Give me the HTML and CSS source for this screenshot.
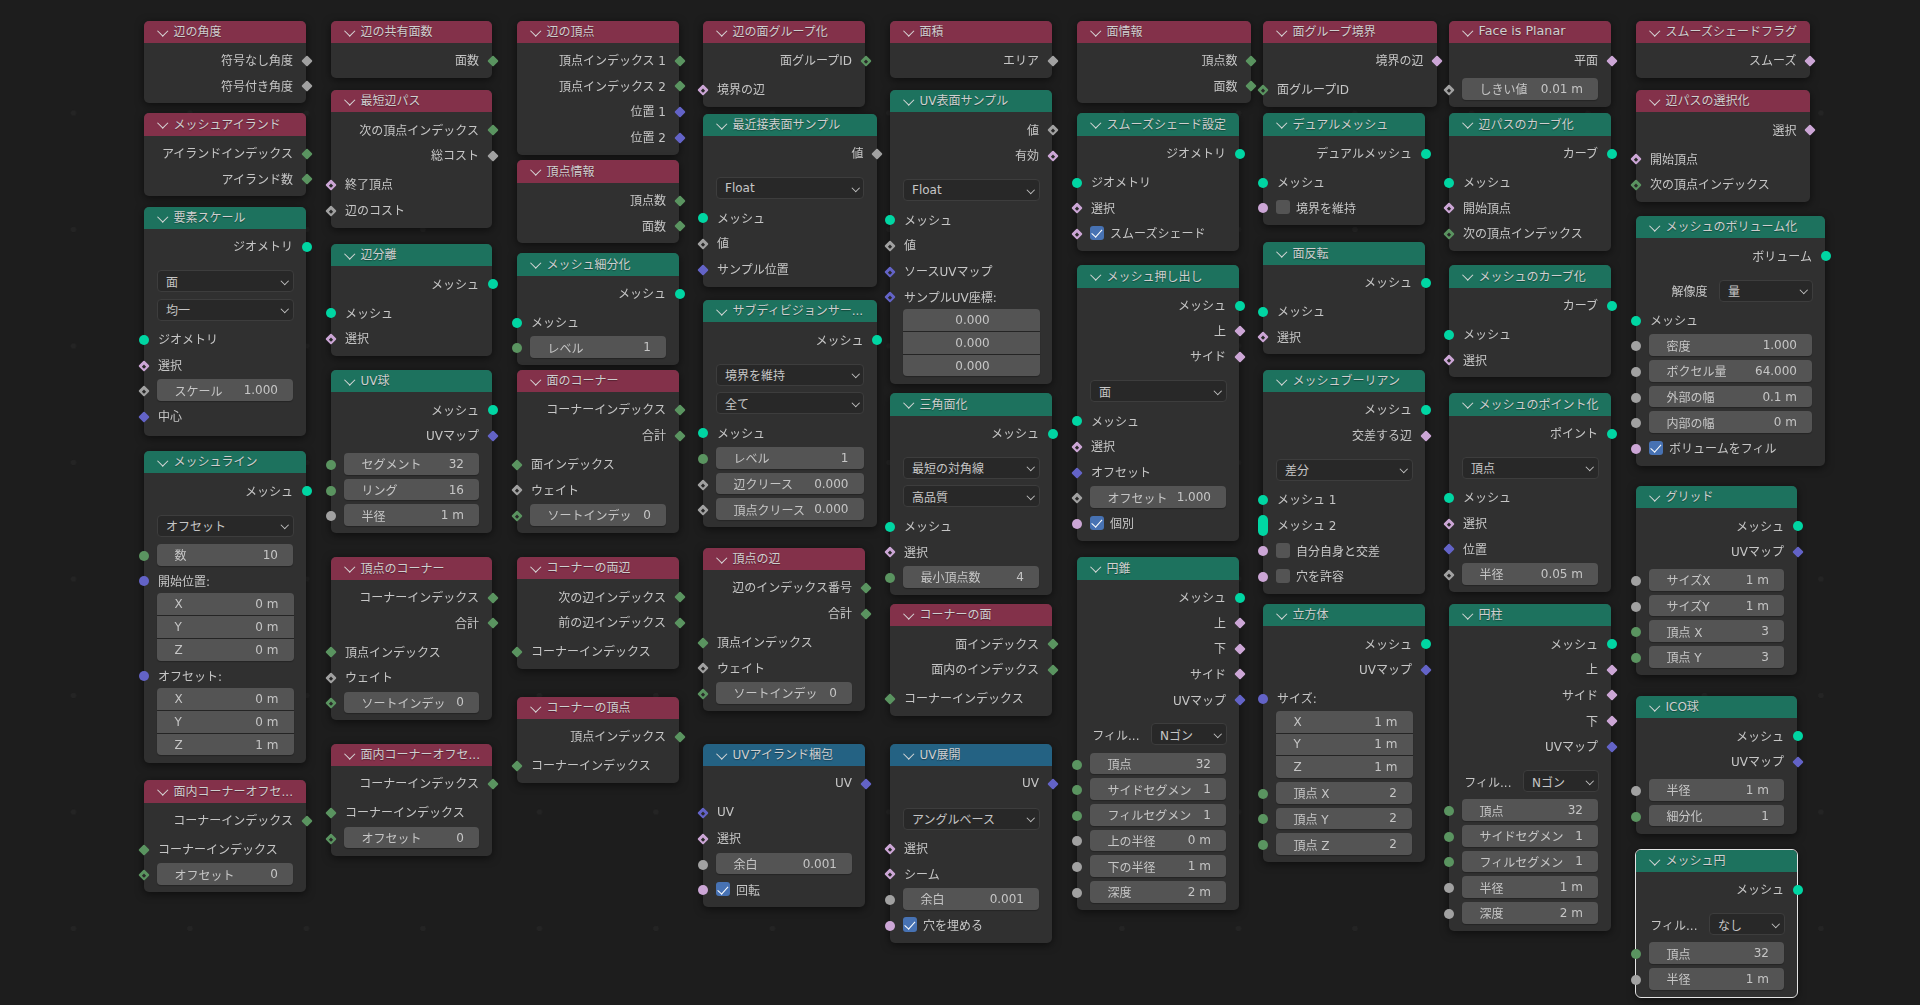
FILE: index.html
```html
<!DOCTYPE html>
<html lang="ja">

<head>
    <meta charset="UTF-8">
    <meta name="viewport" content="width=device-width, initial-scale=1.0">
    <title>Geometry Nodes</title>
    <link rel="stylesheet" href="styles.css">
</head>

<body>
    <div class="canvas">

        <!-- column 1 -->
        <div class="node red col1 edge-angle">
            <div class="head"><span>辺の角度</span></div>
            <div class="body">
                <div class="row out"><span>符号なし角度</span><i class="sock float dia"></i></div>
                <div class="row out"><span>符号付き角度</span><i class="sock float dia"></i></div>
            </div>
        </div>
        <div class="node red col1 mesh-island">
            <div class="head"><span>メッシュアイランド</span></div>
            <div class="body">
                <div class="row out"><span>アイランドインデックス</span><i class="sock int dia"></i></div>
                <div class="row out"><span>アイランド数</span><i class="sock int dia"></i></div>
            </div>
        </div>
        <div class="node green col1 scale-elements">
            <div class="head"><span>要素スケール</span></div>
            <div class="body">
                <div class="row out"><span>ジオメトリ</span><i class="sock geo"></i></div>
                <div class="sel">面</div>
                <div class="sel">均一</div>
                <div class="row"><i class="sock geo"></i><span>ジオメトリ</span></div>
                <div class="row"><i class="sock bool dot"></i><span>選択</span></div>
                <div class="row"><i class="sock float dot"></i><div class="field"><span>スケール</span><span>1.000</span></div></div>
                <div class="row"><i class="sock vec dia"></i><span>中心</span></div>
            </div>
        </div>
        <div class="node green col1 mesh-line">
            <div class="head"><span>メッシュライン</span></div>
            <div class="body">
                <div class="row out"><span>メッシュ</span><i class="sock geo"></i></div>
                <div class="sel">オフセット</div>
                <div class="row"><i class="sock int"></i><div class="field"><span>数</span><span>10</span></div></div>
                <div class="row"><i class="sock vec"></i><span>開始位置:</span></div>
                <div class="vec-group">
                    <div class="field"><span>X</span><span>0 m</span></div>
                    <div class="field"><span>Y</span><span>0 m</span></div>
                    <div class="field"><span>Z</span><span>0 m</span></div>
                </div>
                <div class="row"><i class="sock vec"></i><span>オフセット:</span></div>
                <div class="vec-group">
                    <div class="field"><span>X</span><span>0 m</span></div>
                    <div class="field"><span>Y</span><span>0 m</span></div>
                    <div class="field"><span>Z</span><span>1 m</span></div>
                </div>
            </div>
        </div>
        <div class="node red col1 corner-offset-a">
            <div class="head"><span>面内コーナーオフセ...</span></div>
            <div class="body">
                <div class="row out"><span>コーナーインデックス</span><i class="sock int dia"></i></div>
                <div class="row"><i class="sock int dia"></i><span>コーナーインデックス</span></div>
                <div class="row"><i class="sock int dot"></i><div class="field"><span>オフセット</span><span>0</span></div></div>
            </div>
        </div>

        <!-- column 2 -->
        <div class="node red col2 edge-faces">
            <div class="head"><span>辺の共有面数</span></div>
            <div class="body">
                <div class="row out"><span>面数</span><i class="sock int dia"></i></div>
            </div>
        </div>
        <div class="node red col2 shortest-path">
            <div class="head"><span>最短辺パス</span></div>
            <div class="body">
                <div class="row out"><span>次の頂点インデックス</span><i class="sock int dia"></i></div>
                <div class="row out"><span>総コスト</span><i class="sock float dia"></i></div>
                <div class="row"><i class="sock bool dot"></i><span>終了頂点</span></div>
                <div class="row"><i class="sock float dot"></i><span>辺のコスト</span></div>
            </div>
        </div>
        <div class="node green col2 split-edges">
            <div class="head"><span>辺分離</span></div>
            <div class="body">
                <div class="row out"><span>メッシュ</span><i class="sock geo"></i></div>
                <div class="row"><i class="sock geo"></i><span>メッシュ</span></div>
                <div class="row"><i class="sock bool dot"></i><span>選択</span></div>
            </div>
        </div>
        <div class="node green col2 uv-sphere">
            <div class="head"><span>UV球</span></div>
            <div class="body">
                <div class="row out"><span>メッシュ</span><i class="sock geo"></i></div>
                <div class="row out"><span>UVマップ</span><i class="sock vec dia"></i></div>
                <div class="row"><i class="sock int"></i><div class="field"><span>セグメント</span><span>32</span></div></div>
                <div class="row"><i class="sock int"></i><div class="field"><span>リング</span><span>16</span></div></div>
                <div class="row"><i class="sock float"></i><div class="field"><span>半径</span><span>1 m</span></div></div>
            </div>
        </div>
        <div class="node red col2 vertex-corners">
            <div class="head"><span>頂点のコーナー</span></div>
            <div class="body">
                <div class="row out"><span>コーナーインデックス</span><i class="sock int dia"></i></div>
                <div class="row out"><span>合計</span><i class="sock int dia"></i></div>
                <div class="row"><i class="sock int dia"></i><span>頂点インデックス</span></div>
                <div class="row"><i class="sock float dot"></i><span>ウェイト</span></div>
                <div class="row"><i class="sock int dot"></i><div class="field"><span>ソートインデッ</span><span>0</span></div></div>
            </div>
        </div>
        <div class="node red col2 corner-offset-b">
            <div class="head"><span>面内コーナーオフセ...</span></div>
            <div class="body">
                <div class="row out"><span>コーナーインデックス</span><i class="sock int dia"></i></div>
                <div class="row"><i class="sock int dia"></i><span>コーナーインデックス</span></div>
                <div class="row"><i class="sock int dot"></i><div class="field"><span>オフセット</span><span>0</span></div></div>
            </div>
        </div>

        <!-- column 3 -->
        <div class="node red col3 edge-vertices">
            <div class="head"><span>辺の頂点</span></div>
            <div class="body">
                <div class="row out"><span>頂点インデックス 1</span><i class="sock int dia"></i></div>
                <div class="row out"><span>頂点インデックス 2</span><i class="sock int dia"></i></div>
                <div class="row out"><span>位置 1</span><i class="sock vec dia"></i></div>
                <div class="row out"><span>位置 2</span><i class="sock vec dia"></i></div>
            </div>
        </div>
        <div class="node red col3 vertex-info">
            <div class="head"><span>頂点情報</span></div>
            <div class="body">
                <div class="row out"><span>頂点数</span><i class="sock int dia"></i></div>
                <div class="row out"><span>面数</span><i class="sock int dia"></i></div>
            </div>
        </div>
        <div class="node green col3 subdivide">
            <div class="head"><span>メッシュ細分化</span></div>
            <div class="body">
                <div class="row out"><span>メッシュ</span><i class="sock geo"></i></div>
                <div class="row"><i class="sock geo"></i><span>メッシュ</span></div>
                <div class="row"><i class="sock int"></i><div class="field"><span>レベル</span><span>1</span></div></div>
            </div>
        </div>
        <div class="node red col3 face-corners">
            <div class="head"><span>面のコーナー</span></div>
            <div class="body">
                <div class="row out"><span>コーナーインデックス</span><i class="sock int dia"></i></div>
                <div class="row out"><span>合計</span><i class="sock int dia"></i></div>
                <div class="row"><i class="sock int dia"></i><span>面インデックス</span></div>
                <div class="row"><i class="sock float dot"></i><span>ウェイト</span></div>
                <div class="row"><i class="sock int dot"></i><div class="field"><span>ソートインデッ</span><span>0</span></div></div>
            </div>
        </div>
        <div class="node red col3 corner-edges">
            <div class="head"><span>コーナーの両辺</span></div>
            <div class="body">
                <div class="row out"><span>次の辺インデックス</span><i class="sock int dia"></i></div>
                <div class="row out"><span>前の辺インデックス</span><i class="sock int dia"></i></div>
                <div class="row"><i class="sock int dia"></i><span>コーナーインデックス</span></div>
            </div>
        </div>
        <div class="node red col3 corner-vertex">
            <div class="head"><span>コーナーの頂点</span></div>
            <div class="body">
                <div class="row out"><span>頂点インデックス</span><i class="sock int dia"></i></div>
                <div class="row"><i class="sock int dia"></i><span>コーナーインデックス</span></div>
            </div>
        </div>

        <!-- column 4 -->
        <div class="node red col4 edge-group">
            <div class="head"><span>辺の面グループ化</span></div>
            <div class="body">
                <div class="row out"><span>面グループID</span><i class="sock int dot"></i></div>
                <div class="row"><i class="sock bool dot"></i><span>境界の辺</span></div>
            </div>
        </div>
        <div class="node green col4 wide nearest-sample">
            <div class="head"><span>最近接表面サンプル</span></div>
            <div class="body">
                <div class="row out"><span>値</span><i class="sock float dia"></i></div>
                <div class="sel">Float</div>
                <div class="row"><i class="sock geo"></i><span>メッシュ</span></div>
                <div class="row"><i class="sock float dot"></i><span>値</span></div>
                <div class="row"><i class="sock vec dia"></i><span>サンプル位置</span></div>
            </div>
        </div>
        <div class="node green col4 wide subdiv-surface">
            <div class="head"><span>サブディビジョンサー...</span></div>
            <div class="body">
                <div class="row out"><span>メッシュ</span><i class="sock geo"></i></div>
                <div class="sel">境界を維持</div>
                <div class="sel">全て</div>
                <div class="row"><i class="sock geo"></i><span>メッシュ</span></div>
                <div class="row"><i class="sock int"></i><div class="field"><span>レベル</span><span>1</span></div></div>
                <div class="row"><i class="sock float dot"></i><div class="field"><span>辺クリース</span><span>0.000</span></div></div>
                <div class="row"><i class="sock float dot"></i><div class="field"><span>頂点クリース</span><span>0.000</span></div></div>
            </div>
        </div>
        <div class="node red col4 vertex-edges">
            <div class="head"><span>頂点の辺</span></div>
            <div class="body">
                <div class="row out"><span>辺のインデックス番号</span><i class="sock int dia"></i></div>
                <div class="row out"><span>合計</span><i class="sock int dia"></i></div>
                <div class="row"><i class="sock int dia"></i><span>頂点インデックス</span></div>
                <div class="row"><i class="sock float dot"></i><span>ウェイト</span></div>
                <div class="row"><i class="sock int dot"></i><div class="field"><span>ソートインデッ</span><span>0</span></div></div>
            </div>
        </div>
        <div class="node blue col4 uv-pack">
            <div class="head"><span>UVアイランド梱包</span></div>
            <div class="body">
                <div class="row out"><span>UV</span><i class="sock vec dia"></i></div>
                <div class="row"><i class="sock vec dot"></i><span>UV</span></div>
                <div class="row"><i class="sock bool dot"></i><span>選択</span></div>
                <div class="row"><i class="sock float"></i><div class="field"><span>余白</span><span>0.001</span></div></div>
                <div class="row"><i class="sock bool"></i><b class="check on"></b><span>回転</span></div>
            </div>
        </div>

        <!-- column 5 -->
        <div class="node red col5 face-area">
            <div class="head"><span>面積</span></div>
            <div class="body">
                <div class="row out"><span>エリア</span><i class="sock float dia"></i></div>
            </div>
        </div>
        <div class="node green col5 uv-sample">
            <div class="head"><span>UV表面サンプル</span></div>
            <div class="body">
                <div class="row out"><span>値</span><i class="sock float dot"></i></div>
                <div class="row out"><span>有効</span><i class="sock bool dot"></i></div>
                <div class="sel">Float</div>
                <div class="row"><i class="sock geo"></i><span>メッシュ</span></div>
                <div class="row"><i class="sock float dot"></i><span>値</span></div>
                <div class="row"><i class="sock vec dot"></i><span>ソースUVマップ</span></div>
                <div class="row"><i class="sock vec dot"></i><span>サンプルUV座標:</span></div>
                <div class="vec-group">
                    <div class="field center"><span>0.000</span></div>
                    <div class="field center"><span>0.000</span></div>
                    <div class="field center"><span>0.000</span></div>
                </div>
            </div>
        </div>
        <div class="node green col5 triangulate">
            <div class="head"><span>三角面化</span></div>
            <div class="body">
                <div class="row out"><span>メッシュ</span><i class="sock geo"></i></div>
                <div class="sel">最短の対角線</div>
                <div class="sel">高品質</div>
                <div class="row"><i class="sock geo"></i><span>メッシュ</span></div>
                <div class="row"><i class="sock bool dot"></i><span>選択</span></div>
                <div class="row"><i class="sock int"></i><div class="field"><span>最小頂点数</span><span>4</span></div></div>
            </div>
        </div>
        <div class="node red col5 corner-face">
            <div class="head"><span>コーナーの面</span></div>
            <div class="body">
                <div class="row out"><span>面インデックス</span><i class="sock int dia"></i></div>
                <div class="row out"><span>面内のインデックス</span><i class="sock int dia"></i></div>
                <div class="row"><i class="sock int dia"></i><span>コーナーインデックス</span></div>
            </div>
        </div>
        <div class="node blue col5 uv-unwrap">
            <div class="head"><span>UV展開</span></div>
            <div class="body">
                <div class="row out"><span>UV</span><i class="sock vec dia"></i></div>
                <div class="sel">アングルベース</div>
                <div class="row"><i class="sock bool dot"></i><span>選択</span></div>
                <div class="row"><i class="sock bool dot"></i><span>シーム</span></div>
                <div class="row"><i class="sock float"></i><div class="field"><span>余白</span><span>0.001</span></div></div>
                <div class="row"><i class="sock bool"></i><b class="check on"></b><span>穴を埋める</span></div>
            </div>
        </div>

        <!-- column 6 -->
        <div class="node red col6 wide face-info">
            <div class="head"><span>面情報</span></div>
            <div class="body">
                <div class="row out"><span>頂点数</span><i class="sock int dia"></i></div>
                <div class="row out"><span>面数</span><i class="sock int dia"></i></div>
            </div>
        </div>
        <div class="node green col6 smooth-set">
            <div class="head"><span>スムーズシェード設定</span></div>
            <div class="body">
                <div class="row out"><span>ジオメトリ</span><i class="sock geo"></i></div>
                <div class="row"><i class="sock geo"></i><span>ジオメトリ</span></div>
                <div class="row"><i class="sock bool dot"></i><span>選択</span></div>
                <div class="row"><i class="sock bool dot"></i><b class="check on"></b><span>スムーズシェード</span></div>
            </div>
        </div>
        <div class="node green col6 extrude">
            <div class="head"><span>メッシュ押し出し</span></div>
            <div class="body">
                <div class="row out"><span>メッシュ</span><i class="sock geo"></i></div>
                <div class="row out"><span>上</span><i class="sock bool dia"></i></div>
                <div class="row out"><span>サイド</span><i class="sock bool dia"></i></div>
                <div class="sel">面</div>
                <div class="row"><i class="sock geo"></i><span>メッシュ</span></div>
                <div class="row"><i class="sock bool dot"></i><span>選択</span></div>
                <div class="row"><i class="sock vec dia"></i><span>オフセット</span></div>
                <div class="row"><i class="sock float dot"></i><div class="field"><span>オフセット</span><span>1.000</span></div></div>
                <div class="row"><i class="sock bool"></i><b class="check on"></b><span>個別</span></div>
            </div>
        </div>
        <div class="node green col6 cone">
            <div class="head"><span>円錐</span></div>
            <div class="body">
                <div class="row out"><span>メッシュ</span><i class="sock geo"></i></div>
                <div class="row out"><span>上</span><i class="sock bool dia"></i></div>
                <div class="row out"><span>下</span><i class="sock bool dia"></i></div>
                <div class="row out"><span>サイド</span><i class="sock bool dia"></i></div>
                <div class="row out"><span>UVマップ</span><i class="sock vec dia"></i></div>
                <div class="prop"><span>フィル...</span><div class="sel">Nゴン</div></div>
                <div class="row"><i class="sock int"></i><div class="field"><span>頂点</span><span>32</span></div></div>
                <div class="row"><i class="sock int"></i><div class="field"><span>サイドセグメン</span><span>1</span></div></div>
                <div class="row"><i class="sock int"></i><div class="field"><span>フィルセグメン</span><span>1</span></div></div>
                <div class="row"><i class="sock float"></i><div class="field"><span>上の半径</span><span>0 m</span></div></div>
                <div class="row"><i class="sock float"></i><div class="field"><span>下の半径</span><span>1 m</span></div></div>
                <div class="row"><i class="sock float"></i><div class="field"><span>深度</span><span>2 m</span></div></div>
            </div>
        </div>

        <!-- column 7 -->
        <div class="node red col7 wide group-boundary">
            <div class="head"><span>面グループ境界</span></div>
            <div class="body">
                <div class="row out"><span>境界の辺</span><i class="sock bool dia"></i></div>
                <div class="row"><i class="sock int dot"></i><span>面グループID</span></div>
            </div>
        </div>
        <div class="node green col7 dual-mesh">
            <div class="head"><span>デュアルメッシュ</span></div>
            <div class="body">
                <div class="row out"><span>デュアルメッシュ</span><i class="sock geo"></i></div>
                <div class="row"><i class="sock geo"></i><span>メッシュ</span></div>
                <div class="row"><i class="sock bool"></i><b class="check"></b><span>境界を維持</span></div>
            </div>
        </div>
        <div class="node green col7 flip-faces">
            <div class="head"><span>面反転</span></div>
            <div class="body">
                <div class="row out"><span>メッシュ</span><i class="sock geo"></i></div>
                <div class="row"><i class="sock geo"></i><span>メッシュ</span></div>
                <div class="row"><i class="sock bool dot"></i><span>選択</span></div>
            </div>
        </div>
        <div class="node green col7 mesh-boolean">
            <div class="head"><span>メッシュブーリアン</span></div>
            <div class="body">
                <div class="row out"><span>メッシュ</span><i class="sock geo"></i></div>
                <div class="row out"><span>交差する辺</span><i class="sock bool dia"></i></div>
                <div class="sel">差分</div>
                <div class="row"><i class="sock geo"></i><span>メッシュ 1</span></div>
                <div class="row"><i class="sock geo pill"></i><span>メッシュ 2</span></div>
                <div class="row"><i class="sock bool"></i><b class="check"></b><span>自分自身と交差</span></div>
                <div class="row"><i class="sock bool"></i><b class="check"></b><span>穴を許容</span></div>
            </div>
        </div>
        <div class="node green col7 cube">
            <div class="head"><span>立方体</span></div>
            <div class="body">
                <div class="row out"><span>メッシュ</span><i class="sock geo"></i></div>
                <div class="row out"><span>UVマップ</span><i class="sock vec dia"></i></div>
                <div class="row"><i class="sock vec"></i><span>サイズ:</span></div>
                <div class="vec-group">
                    <div class="field"><span>X</span><span>1 m</span></div>
                    <div class="field"><span>Y</span><span>1 m</span></div>
                    <div class="field"><span>Z</span><span>1 m</span></div>
                </div>
                <div class="row"><i class="sock int"></i><div class="field"><span>頂点 X</span><span>2</span></div></div>
                <div class="row"><i class="sock int"></i><div class="field"><span>頂点 Y</span><span>2</span></div></div>
                <div class="row"><i class="sock int"></i><div class="field"><span>頂点 Z</span><span>2</span></div></div>
            </div>
        </div>

        <!-- column 8 -->
        <div class="node red col8 face-planar">
            <div class="head"><span>Face is Planar</span></div>
            <div class="body">
                <div class="row out"><span>平面</span><i class="sock bool dia"></i></div>
                <div class="row"><i class="sock float dot"></i><div class="field"><span>しきい値</span><span>0.01 m</span></div></div>
            </div>
        </div>
        <div class="node green col8 path-curve">
            <div class="head"><span>辺パスのカーブ化</span></div>
            <div class="body">
                <div class="row out"><span>カーブ</span><i class="sock geo"></i></div>
                <div class="row"><i class="sock geo"></i><span>メッシュ</span></div>
                <div class="row"><i class="sock bool dot"></i><span>開始頂点</span></div>
                <div class="row"><i class="sock int dot"></i><span>次の頂点インデックス</span></div>
            </div>
        </div>
        <div class="node green col8 mesh-curve">
            <div class="head"><span>メッシュのカーブ化</span></div>
            <div class="body">
                <div class="row out"><span>カーブ</span><i class="sock geo"></i></div>
                <div class="row"><i class="sock geo"></i><span>メッシュ</span></div>
                <div class="row"><i class="sock bool dot"></i><span>選択</span></div>
            </div>
        </div>
        <div class="node green col8 mesh-points">
            <div class="head"><span>メッシュのポイント化</span></div>
            <div class="body">
                <div class="row out"><span>ポイント</span><i class="sock geo"></i></div>
                <div class="sel">頂点</div>
                <div class="row"><i class="sock geo"></i><span>メッシュ</span></div>
                <div class="row"><i class="sock bool dot"></i><span>選択</span></div>
                <div class="row"><i class="sock vec dia"></i><span>位置</span></div>
                <div class="row"><i class="sock float dot"></i><div class="field"><span>半径</span><span>0.05 m</span></div></div>
            </div>
        </div>
        <div class="node green col8 cylinder">
            <div class="head"><span>円柱</span></div>
            <div class="body">
                <div class="row out"><span>メッシュ</span><i class="sock geo"></i></div>
                <div class="row out"><span>上</span><i class="sock bool dia"></i></div>
                <div class="row out"><span>サイド</span><i class="sock bool dia"></i></div>
                <div class="row out"><span>下</span><i class="sock bool dia"></i></div>
                <div class="row out"><span>UVマップ</span><i class="sock vec dia"></i></div>
                <div class="prop"><span>フィル...</span><div class="sel">Nゴン</div></div>
                <div class="row"><i class="sock int"></i><div class="field"><span>頂点</span><span>32</span></div></div>
                <div class="row"><i class="sock int"></i><div class="field"><span>サイドセグメン</span><span>1</span></div></div>
                <div class="row"><i class="sock int"></i><div class="field"><span>フィルセグメン</span><span>1</span></div></div>
                <div class="row"><i class="sock float"></i><div class="field"><span>半径</span><span>1 m</span></div></div>
                <div class="row"><i class="sock float"></i><div class="field"><span>深度</span><span>2 m</span></div></div>
            </div>
        </div>

        <!-- column 9 -->
        <div class="node red col9 wide smooth-flag">
            <div class="head"><span>スムーズシェードフラグ</span></div>
            <div class="body">
                <div class="row out"><span>スムーズ</span><i class="sock bool dia"></i></div>
            </div>
        </div>
        <div class="node red col9 wide path-select">
            <div class="head"><span>辺パスの選択化</span></div>
            <div class="body">
                <div class="row out"><span>選択</span><i class="sock bool dia"></i></div>
                <div class="row"><i class="sock bool dot"></i><span>開始頂点</span></div>
                <div class="row"><i class="sock int dot"></i><span>次の頂点インデックス</span></div>
            </div>
        </div>
        <div class="node green col9 mesh-volume">
            <div class="head"><span>メッシュのボリューム化</span></div>
            <div class="body">
                <div class="row out"><span>ボリューム</span><i class="sock geo"></i></div>
                <div class="prop"><span>解像度</span><div class="sel">量</div></div>
                <div class="row"><i class="sock geo"></i><span>メッシュ</span></div>
                <div class="row"><i class="sock float"></i><div class="field"><span>密度</span><span>1.000</span></div></div>
                <div class="row"><i class="sock float"></i><div class="field"><span>ボクセル量</span><span>64.000</span></div></div>
                <div class="row"><i class="sock float"></i><div class="field"><span>外部の幅</span><span>0.1 m</span></div></div>
                <div class="row"><i class="sock float"></i><div class="field"><span>内部の幅</span><span>0 m</span></div></div>
                <div class="row"><i class="sock bool"></i><b class="check on"></b><span>ボリュームをフィル</span></div>
            </div>
        </div>
        <div class="node green col9 narrow grid">
            <div class="head"><span>グリッド</span></div>
            <div class="body">
                <div class="row out"><span>メッシュ</span><i class="sock geo"></i></div>
                <div class="row out"><span>UVマップ</span><i class="sock vec dia"></i></div>
                <div class="row"><i class="sock float"></i><div class="field"><span>サイズX</span><span>1 m</span></div></div>
                <div class="row"><i class="sock float"></i><div class="field"><span>サイズY</span><span>1 m</span></div></div>
                <div class="row"><i class="sock int"></i><div class="field"><span>頂点 X</span><span>3</span></div></div>
                <div class="row"><i class="sock int"></i><div class="field"><span>頂点 Y</span><span>3</span></div></div>
            </div>
        </div>
        <div class="node green col9 narrow ico-sphere">
            <div class="head"><span>ICO球</span></div>
            <div class="body">
                <div class="row out"><span>メッシュ</span><i class="sock geo"></i></div>
                <div class="row out"><span>UVマップ</span><i class="sock vec dia"></i></div>
                <div class="row"><i class="sock float"></i><div class="field"><span>半径</span><span>1 m</span></div></div>
                <div class="row"><i class="sock int"></i><div class="field"><span>細分化</span><span>1</span></div></div>
            </div>
        </div>
        <div class="node green col9 narrow selected mesh-circle">
            <div class="head"><span>メッシュ円</span></div>
            <div class="body">
                <div class="row out"><span>メッシュ</span><i class="sock geo"></i></div>
                <div class="prop"><span>フィル...</span><div class="sel">なし</div></div>
                <div class="row"><i class="sock int"></i><div class="field"><span>頂点</span><span>32</span></div></div>
                <div class="row"><i class="sock float"></i><div class="field"><span>半径</span><span>1 m</span></div></div>
            </div>
        </div>

    </div>
</body>

</html>
```

FILE: styles.css
```css
* {
    box-sizing: border-box;
}

body {
    margin: 0;
    background-color: #1d1d1d;
    overflow: hidden;
    font-family: "DejaVu Sans", "Noto Sans CJK JP", sans-serif;
    font-size: 12px;
    color: #c6c6c6;
}

/* grid dots of the node editor, the picture is a little soft overall */
.canvas {
    position: relative;
    width: 1920px;
    height: 1005px;
    background-image: radial-gradient(circle at 73.5px 113px, #242424 2.5px, transparent 3px);
    background-size: 116.5px 116.5px;
    filter: blur(0.35px);
}

.node {
    position: absolute;
    width: 162px;
    background-color: #303030;
    border-radius: 5px;
    box-shadow: 0 2px 8px rgba(0, 0, 0, 0.55);
}

.head {
    display: flex;
    align-items: center;
    height: 22.4px;
    padding: 0 0 2.5px 29.5px;
    border-radius: 5px 5px 0 0;
    color: #cfcfcf;
    white-space: nowrap;
    position: relative;
    text-shadow: 0 1px 1px rgba(0, 0, 0, 0.35);
}

/* collapse arrow */
.head::before {
    content: "";
    position: absolute;
    left: 14.5px;
    top: 6px;
    width: 6.5px;
    height: 6.5px;
    border-right: 1.2px solid #d8d8d8;
    border-bottom: 1.2px solid #d8d8d8;
    transform: rotate(45deg);
}

.face-planar .head span {
    font-size: 12.7px;
}

.red .head {
    background-color: #83314a;
}

.green .head {
    background-color: #1d725e;
}

.blue .head {
    background-color: #246283;
}

.body {
    padding: 5px 0 4.2px;
}

/* the bottom padding lifts text a little off the socket centre */
.row {
    position: relative;
    display: flex;
    align-items: center;
    height: 25.65px;
    padding: 0 13px 2px 14px;
    white-space: nowrap;
}

.row.out {
    justify-content: flex-end;
}

.out + .row:not(.out) {
    margin-top: 3.4px;
}

/* sockets */
.sock {
    position: absolute;
    top: 50%;
    left: -5.3px;
    width: 10px;
    height: 10px;
    margin-top: -5px;
    border-radius: 50%;
}

.out .sock {
    left: auto;
    right: -5.7px;
}

.sock.geo {
    background-color: #00d6a3;
}

.sock.int {
    background-color: #5a9460;
}

.sock.float {
    background-color: #a1a1a1;
}

.sock.bool {
    background-color: #cca6d6;
}

.sock.vec {
    background-color: #6363c7;
}

.sock.dia,
.sock.dot {
    left: -4.3px;
    width: 8px;
    height: 8px;
    margin-top: -4px;
    border-radius: 1px;
    transform: rotate(45deg);
}

.out .sock.dia,
.out .sock.dot {
    left: auto;
    right: -4.7px;
}

.sock.dot::after {
    content: "";
    position: absolute;
    left: 2.5px;
    top: 2.5px;
    width: 3px;
    height: 3px;
    background-color: #2a2a2a;
}

.sock.pill {
    height: 21px;
    margin-top: -10.5px;
    border-radius: 5px;
}

/* number fields */
.field {
    display: flex;
    flex: 1;
    align-items: center;
    justify-content: space-between;
    height: 21.8px;
    margin: 0 0 0 -1.5px;
    padding: 0 15px 0 18px;
    background-color: #545454;
    border-radius: 4px;
    box-shadow: 0 1px 1px rgba(0, 0, 0, 0.25);
    white-space: nowrap;
}

.field.center {
    justify-content: center;
}

.vec-group {
    display: flex;
    flex-direction: column;
    gap: 1px;
    margin: -1px 12.5px 2.9px;
}

.vec-group .field {
    flex: none;
    margin: 0;
    border-radius: 0;
}

.vec-group .field:first-child {
    border-radius: 4px 4px 0 0;
}

.vec-group .field:last-child {
    border-radius: 0 0 4px 4px;
}

/* dropdowns */
.sel {
    position: relative;
    display: flex;
    align-items: center;
    height: 22px;
    margin: 0 12.5px 6.3px;
    padding-left: 8.5px;
    background-color: #282828;
    border: 1px solid #3d3d3d;
    border-radius: 4px;
    white-space: nowrap;
}

.sel::after {
    content: "";
    position: absolute;
    right: 5px;
    top: 6.5px;
    width: 4.5px;
    height: 4.5px;
    border-right: 1.2px solid #c6c6c6;
    border-bottom: 1.2px solid #c6c6c6;
    transform: rotate(45deg);
}

/* margins collapse here, so this is the whole gap */
.sel + .sel {
    margin-top: 6.6px;
}

.out + .sel,
.out + .prop {
    margin-top: 10.5px;
}

.prop {
    display: flex;
    align-items: center;
    gap: 11px;
    margin: 0 12.5px 6.3px;
}

.prop > span {
    flex: 1;
    text-align: right;
    white-space: nowrap;
}

.prop .sel {
    width: 76px;
    margin: 0;
}

.mesh-volume .prop .sel {
    width: 94px;
}

/* checkboxes */
.check {
    position: relative;
    flex: none;
    width: 14.5px;
    height: 14.5px;
    margin: 0 6px 0 -1.5px;
    background-color: #545454;
    border-radius: 3px;
}

.check.on {
    background-color: #4772b3;
}

.check.on::after {
    content: "";
    position: absolute;
    left: 4.6px;
    top: 1.6px;
    width: 5px;
    height: 8.5px;
    border-right: 1.8px solid #fff;
    border-bottom: 1.8px solid #fff;
    transform: rotate(42deg);
}

.selected {
    outline: 1.5px solid #e4e4e4;
    outline-offset: 0.5px;
}

/* columns */
.col1 { left: 144px; }
.col2 { left: 331px; width: 161px; }
.col3 { left: 517px; }
.col4 { left: 703px; }
.col5 { left: 890px; }
.col6 { left: 1077px; }
.col7 { left: 1263px; }
.col8 { left: 1449px; }
.col9 { left: 1636px; }

.wide { width: 173.5px; }
.narrow { width: 161px; }
.mesh-volume { width: 189px; }

/* node positions on the canvas */
.edge-angle { top: 20.5px; }
.mesh-island { top: 113.3px; }
.scale-elements { top: 206.7px; }
.scale-elements .body { padding-bottom: 6.5px; }
.mesh-line { top: 451px; }
.corner-offset-a { top: 780.3px; }

.edge-faces { top: 20.5px; }
.shortest-path { top: 90px; }
.split-edges { top: 244px; }
.uv-sphere { top: 370px; }
.vertex-corners { top: 557.3px; }
.corner-offset-b { top: 743.7px; }

.edge-vertices { top: 20.5px; }
.vertex-info { top: 160.3px; }
.subdivide { top: 253.3px; }
.face-corners { top: 369.7px; }
.corner-edges { top: 557px; }
.corner-vertex { top: 696.7px; }

.edge-group { top: 20.5px; }
.nearest-sample { top: 113.7px; }
.subdiv-surface { top: 300px; }
.vertex-edges { top: 547.7px; }
.uv-pack { top: 744px; }

.face-area { top: 20.5px; }
.uv-sample { top: 90px; }
.triangulate { top: 393.3px; }
.corner-face { top: 604px; }
.uv-unwrap { top: 744px; }

.face-info { top: 20.5px; }
.smooth-set { top: 113.3px; }
.extrude { top: 265.3px; }
.cone { top: 557.3px; }

.group-boundary { top: 20.5px; }
.dual-mesh { top: 113.3px; }
.flip-faces { top: 242.3px; }
.mesh-boolean { top: 369.7px; }
.cube { top: 604px; }

.face-planar { top: 20.5px; }
.path-curve { top: 113.3px; }
.mesh-curve { top: 265.3px; }
.mesh-points { top: 393.3px; }
.cylinder { top: 604px; }

.smooth-flag { top: 20.5px; }
.path-select { top: 90px; }
.mesh-volume { top: 216px; }
.grid { top: 486px; }
.ico-sphere { top: 696px; }
.mesh-circle { top: 849.5px; }
```
